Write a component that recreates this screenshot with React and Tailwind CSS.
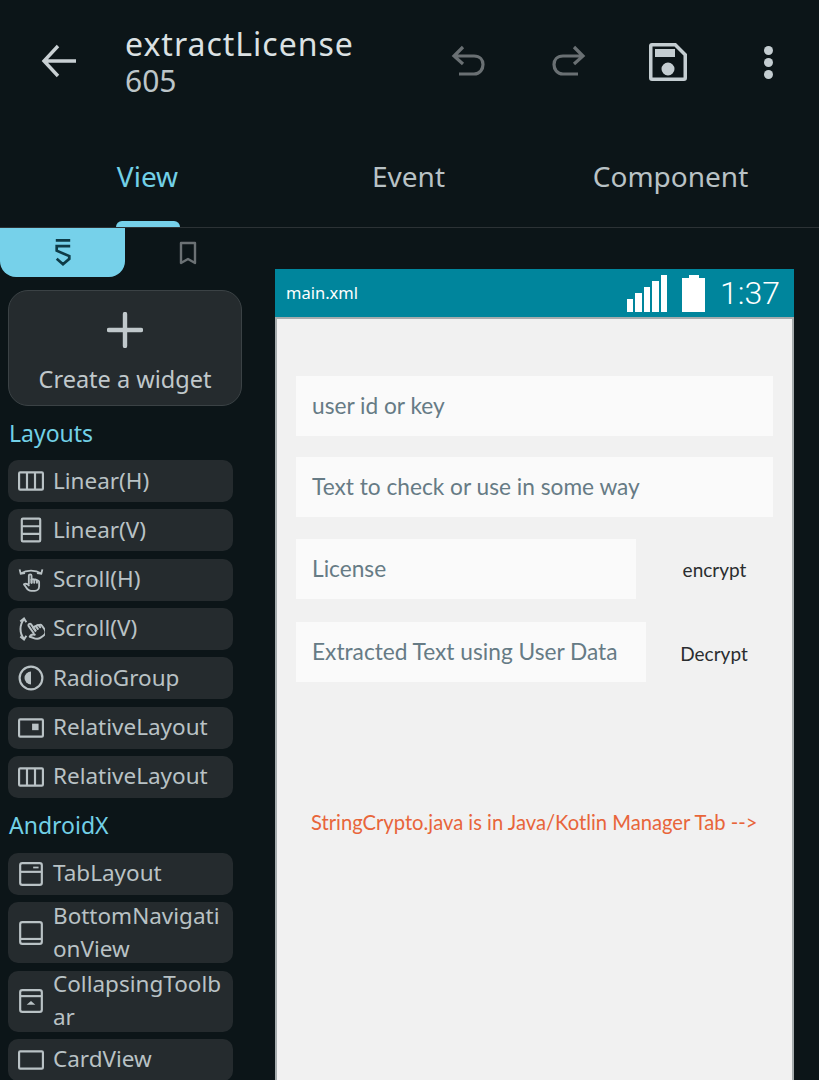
const SANS = "font-['Noto_Sans',sans-serif]";
const PREVIEW = "font-['Lato',sans-serif]";

const Icon = ({ children, className = "w-[26px] h-[26px]" }) => (
  <svg viewBox="0 0 24 24" fill="none" stroke="currentColor" strokeWidth="2" className={className}>
    {children}
  </svg>
);

// pointing hand shared by both scroll icons
const Hand = () => (
  <g strokeWidth="1.7" strokeLinejoin="round" strokeLinecap="round">
    <path d="M10 15.5V8a1.25 1.25 0 0 1 2.5 0v6.5" />
    <path d="M12.5 11.5v3M15 11.8v2.7M17.5 12.5v2" strokeWidth="1.8" />
    <path d="M12.5 11.5c1-.5 2-.4 2.5.3 1-.4 2-.2 2.5.7 1-.2 2 .3 2 1.5v4c0 2.4-2 4-4 4h-3.2c-2 0-3.8-1.5-5-3.6L5.5 16c1.5-1 3.3-.4 4.5 1" />
  </g>
);

const LinearH = () => (
  <Icon>
    <rect x="1" y="4" width="22" height="16" rx="1" />
    <path d="M8.3 4v16M15.7 4v16" />
  </Icon>
);
const LinearV = () => (
  <Icon>
    <rect x="3.5" y="1.5" width="17" height="21" rx="1" />
    <path d="M3.5 8.5h17M3.5 15.5h17" />
  </Icon>
);
const ScrollH = () => (
  <Icon>
    <path d="M2.5 6C8 2.5 16 2.5 21.5 6" strokeWidth="1.7" />
    <path d="M1.5 2.2l1 4 4-.6M22.5 2.2l-1 4-4-.6" strokeWidth="1.7" />
    <Hand />
  </Icon>
);
const ScrollV = () => (
  <Icon className="w-[28px] h-[28px]">
    <path d="M6 3.5C2 8.5 2 15.5 6 20.5" strokeWidth="1.7" />
    <path d="M2.8 5.5L6 3l2 3.2M2.8 18.5L6 21l2-3.2" strokeWidth="1.7" />
    <g transform="translate(3.5 -1.5) rotate(-35 13 15)">
      <Hand />
    </g>
  </Icon>
);
const Radio = () => (
  <Icon>
    <circle cx="12" cy="12" r="10.5" />
    <path d="M12 6a6 6 0 0 0 0 12z" fill="currentColor" stroke="none" />
  </Icon>
);
const Relative = () => (
  <Icon>
    <rect x="1" y="4" width="22" height="16" rx="1" />
    <rect x="13" y="8" width="6" height="6" fill="currentColor" stroke="none" />
  </Icon>
);
const TabLayoutIcon = () => (
  <Icon>
    <rect x="2" y="2" width="20" height="20" rx="2" />
    <path d="M2 10h20" />
    <path d="M14 6h5" strokeWidth="1.6" />
  </Icon>
);
const BottomNav = () => (
  <Icon>
    <rect x="2" y="2" width="20" height="20" rx="2" />
    <path d="M2 17.5h20" />
  </Icon>
);
const Toolbar = () => (
  <Icon>
    <rect x="2" y="2" width="20" height="20" rx="2" />
    <path d="M2 7.5h20" />
    <path d="M8 15.5l4-3.5 4 3.5z" fill="currentColor" stroke="none" />
  </Icon>
);
const Card = () => (
  <Icon>
    <rect x="1" y="4" width="22" height="16" rx="1" />
  </Icon>
);

const Widget = ({ icon, children, h = "h-[42px]" }) => (
  <div className={`${h} w-[225px] shrink-0 rounded-[10px] bg-[#252b2e] flex items-center text-[#b9c2c5]`}>
    <div className="w-[45px] shrink-0 flex justify-center">{icon}</div>
    <span className="-mt-[2px] text-[22.5px] leading-[33px] break-all w-[172px]">{children}</span>
  </div>
);

const Field = ({ children, w = "w-full" }) => (
  <div className={`${w} h-[60px] shrink-0 bg-[#fafafa] flex items-center pl-4 text-[22.7px] text-[#667b85]`}>
    {children}
  </div>
);

export default function App() {
  return (
    <div className={`${SANS} w-[819px] h-[1080px] overflow-hidden bg-[#0c1518] flex flex-col`}>
      {/* Toolbar */}
      <div className="h-[125px] shrink-0 flex items-start pt-[26px]">
        <div className="w-[125px] pl-[41px] pt-[17px] text-[#c9d0d3]">
          <svg viewBox="0 0 36 36" fill="none" stroke="currentColor" strokeWidth="3.4" className="w-[36px] h-[36px]">
            <path d="M35 18H4M17 3L3 18l14 15" />
          </svg>
        </div>
        <div className="w-[325px]">
          <div className="text-[32px] leading-[35px] tracking-[1px] text-[#dbe1e3] whitespace-nowrap">extractLicense</div>
          <div className="mt-[2px] text-[30px] leading-[35px] text-[#bcc5c8]">605</div>
        </div>
        <div className="flex items-center pt-[16px]">
          <svg viewBox="0 0 36 36" fill="none" stroke="currentColor" strokeWidth="3.2" className="w-[36px] h-[36px] text-[#6a7073] ml-[1px]">
            <path d="M12 3L3 12l9 8M3 12h20c6 0 9 4 9 8.5S29 30 23 30H8" />
          </svg>
          <svg viewBox="0 0 36 36" fill="none" stroke="currentColor" strokeWidth="3.2" className="w-[36px] h-[36px] text-[#6a7073] ml-[63px]">
            <path d="M24 3l9 9-9 8M33 12H13C7 12 4 16 4 20.5S7 30 13 30h15" />
          </svg>
          <svg viewBox="0 0 40 40" className="w-[40px] h-[40px] text-[#c4cdd1] ml-[62px]" fill="currentColor">
            <path fillRule="evenodd" d="M4 1h24l11 11v24a3 3 0 0 1-3 3H4a3 3 0 0 1-3-3V4a3 3 0 0 1 3-3zm.5 3.5v31h31V13.5L26.5 4.5zM7 7h20v8H7zm13 13.5a6.5 6.5 0 1 1 0 13 6.5 6.5 0 0 1 0-13z" />
          </svg>
          <div className="ml-[76px] flex flex-col gap-[3px]">
            <span className="block w-[9px] h-[9px] rounded-full bg-[#c4cdd1]" />
            <span className="block w-[9px] h-[9px] rounded-full bg-[#c4cdd1]" />
            <span className="block w-[9px] h-[9px] rounded-full bg-[#c4cdd1]" />
          </div>
        </div>
      </div>

      {/* Tabs */}
      <div className="h-[103px] shrink-0 border-b border-[#2c3235] flex text-[28px]">
        <div className="w-[295px] flex flex-col items-center">
          <span className="mt-[29px] leading-[44px] text-[#72d0e6]">View</span>
          <span className="mt-auto w-[64px] h-[6px] rounded-t-[6px] bg-[#76d1ea]" />
        </div>
        <div className="w-[227px] text-center">
          <span className="block mt-[29px] leading-[44px] text-[#b9c2c5]">Event</span>
        </div>
        <div className="w-[297px] text-center">
          <span className="block mt-[29px] leading-[44px] text-[#b9c2c5]">Component</span>
        </div>
      </div>

      <div className="flex-1 min-h-0 flex">
        {/* Palette */}
        <div className="w-[275px] shrink-0 flex flex-col">
          <div className="flex h-[49px] shrink-0">
            <div className="w-[125px] rounded-b-[16px] bg-[#76d1ea] flex items-center justify-center text-[#0e3b47]">
              <svg viewBox="0 0 20 32" fill="none" stroke="currentColor" strokeWidth="3" className="w-[18px] h-[29px]">
                <path d="M2 2.5h16M18 9H3v5l14 6v3l-7 6-7-6" />
              </svg>
            </div>
            <div className="w-[125px] flex items-center justify-center text-[#6b7174]">
              <svg viewBox="0 0 20 24" fill="none" stroke="currentColor" strokeWidth="2.4" className="w-[20px] h-[24px]">
                <path d="M3 2h14v20l-7-4-7 4z" strokeLinejoin="round" />
              </svg>
            </div>
          </div>
          <div className="mt-[13px] ml-2 w-[234px] h-[116px] shrink-0 rounded-[20px] bg-[#252b2e] border border-[#3b4245] flex flex-col items-center text-[#c0c8cb]">
            <svg viewBox="0 0 36 36" fill="none" stroke="currentColor" strokeWidth="4.4" strokeLinecap="round" className="w-[36px] h-[36px] mt-[21px]">
              <path d="M18 2v32M2 18h32" />
            </svg>
            <span className="mt-[13px] text-[23.5px] leading-[36px]">Create a widget</span>
          </div>
          <div className="ml-[9px] mt-[9px] text-[23px] leading-[36px] text-[#72d0e6]">Layouts</div>
          <div className="ml-2 mt-[9px] flex flex-col gap-[7.33px]">
            <Widget icon={<LinearH />}>Linear(H)</Widget>
            <Widget icon={<LinearV />}>Linear(V)</Widget>
            <Widget icon={<ScrollH />}>Scroll(H)</Widget>
            <Widget icon={<ScrollV />}>Scroll(V)</Widget>
            <Widget icon={<Radio />}>RadioGroup</Widget>
            <Widget icon={<Relative />}>RelativeLayout</Widget>
            <Widget icon={<LinearH />}>RelativeLayout</Widget>
          </div>
          <div className="ml-[9px] mt-[9px] text-[23px] leading-[36px] text-[#72d0e6]">AndroidX</div>
          <div className="ml-2 mt-[10px] flex flex-col gap-[7.33px]">
            <Widget icon={<TabLayoutIcon />}>TabLayout</Widget>
            <Widget icon={<BottomNav />} h="h-[61px]">BottomNavigationView</Widget>
            <Widget icon={<Toolbar />} h="h-[61px]">CollapsingToolbar</Widget>
            <Widget icon={<Card />}>CardView</Widget>
          </div>
        </div>

        {/* Preview */}
        <div className="w-[519px] shrink-0 pt-[41px] flex flex-col">
          <div className="h-[48px] shrink-0 bg-[#00859c] flex items-center pl-[11px] pr-[14px] text-white">
            <span className="text-[16.5px]">main.xml</span>
            <div className="ml-auto flex items-end gap-[2px] h-[37px]">
              <span className="block w-[6.5px] h-[13px] bg-white" />
              <span className="block w-[6.5px] h-[19px] bg-white" />
              <span className="block w-[6.5px] h-[25px] bg-white" />
              <span className="block w-[6.5px] h-[31px] bg-white" />
              <span className="block w-[6.5px] h-[37px] bg-white" />
            </div>
            <div className="ml-[15px] flex flex-col items-center">
              <span className="block w-[10px] h-[3px] bg-white" />
              <span className="block w-[23px] h-[34px] bg-white" />
            </div>
            <span className="ml-[15px] font-['Roboto',sans-serif] font-light text-[32px]">1:37</span>
          </div>
          <div className={`${PREVIEW} flex-1 bg-[#f1f1f1] border-x-2 border-t-2 border-[#a6acae] px-[19px] pt-[57px]`}>
            <Field>user id or key</Field>
            <div className="mt-[21px]">
              <Field>Text to check or use in some way</Field>
            </div>
            <div className="mt-[22px] flex">
              <Field w="w-[340px]">License</Field>
              <span className="flex-1 text-center pl-[20px] pt-[17px] text-[19px] leading-[28px] text-[#2a2d2f]">encrypt</span>
            </div>
            <div className="mt-[23px] flex">
              <Field w="w-[350px]">Extracted Text using User Data</Field>
              <span className="flex-1 text-center pl-[9px] pt-[18px] text-[19px] leading-[28px] text-[#2a2d2f]">Decrypt</span>
            </div>
            <div className="mt-[126px] pl-[15px] text-[20.2px] leading-[28px] text-[#e8653a] whitespace-nowrap">
              StringCrypto.java is in Java/Kotlin Manager Tab --&gt;
            </div>
          </div>
        </div>
      </div>
    </div>
  );
}
